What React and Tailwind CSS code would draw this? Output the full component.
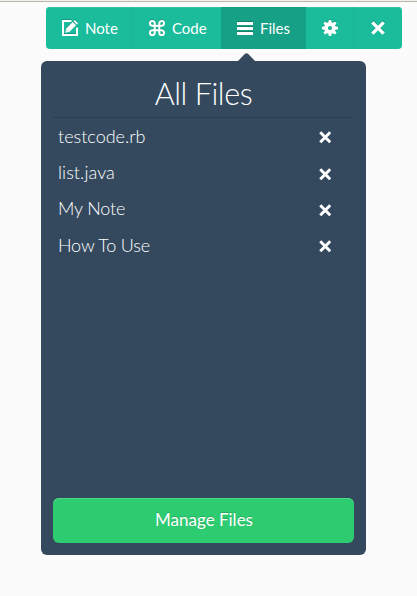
import React from 'react';

function Cross({ className }) {
  return (
    <svg className={className} viewBox="0 0 14 14" fill="none" stroke="currentColor" strokeWidth="3.3" strokeLinecap="butt">
      <path d="M1.4 1.4 12.6 12.6M12.6 1.4 1.4 12.6" />
    </svg>
  );
}

function NoteIcon() {
  return (
    <svg className="size-4 shrink-0 drop-shadow-[0_-1px_0_#159a80]" viewBox="0 0 16 16" fill="none" stroke="currentColor">
      <path d="M9.5 1H1v14h14V7.5" strokeWidth="2" />
      <path d="M3.2 12.8l1-4.4 6.5-6.5 3.4 3.4-6.5 6.5zM11.5 1.3 12.8 0 16 3.2l-1.3 1.3z" fill="currentColor" stroke="none" />
      <path d="M4.6 10.2l1.3 1.3" stroke="#1abc9c" strokeWidth=".6" />
    </svg>
  );
}

function CommandIcon() {
  return (
    <svg className="size-4 shrink-0 drop-shadow-[0_-1px_0_#159a80]" viewBox="0 0 16 16" fill="none" stroke="currentColor" strokeWidth="2">
      <path d="M5.7 5.7h4.6v4.6H5.7zM5.7 5.7H3.35A2.35 2.35 0 1 1 5.7 3.35zM10.3 5.7V3.35a2.35 2.35 0 1 1 2.35 2.35zM10.3 10.3h2.35a2.35 2.35 0 1 1-2.35 2.35zM5.7 10.3v2.35a2.35 2.35 0 1 1-2.35-2.35z" />
    </svg>
  );
}

function MenuIcon() {
  return (
    <svg className="size-4 shrink-0 drop-shadow-[0_-1px_0_#128269]" viewBox="0 0 16 16" fill="currentColor">
      <path d="M0 2h16v3H0zM0 7h16v3H0zM0 12h16v3H0z" />
    </svg>
  );
}

const TEETH = [0, 45, 90, 135, 180, 225, 270, 315];

function GearIcon() {
  return (
    <svg className="size-4 drop-shadow-[0_-1px_0_#159a80]" viewBox="0 0 16 16" fill="currentColor">
      <circle cx="8" cy="8" r="4" fill="none" stroke="currentColor" strokeWidth="3.8" />
      {TEETH.map((angle) => (
        <path key={angle} d="M6.3 3 6.8 0h2.4L9.7 3z" transform={`rotate(${angle} 8 8)`} />
      ))}
    </svg>
  );
}

const FILES = [
  { name: 'testcode.rb', tracking: 'tracking-normal' },
  { name: 'list.java', tracking: 'tracking-[0.08px]' },
  { name: 'My Note', tracking: 'tracking-[-0.15px]' },
  { name: 'How To Use', tracking: 'tracking-[-0.18px]' },
];

export default function App() {
  return (
    <div className="h-[596px] w-[417px] overflow-hidden bg-[#fbfbfb] font-['Lato',sans-serif] text-white">
      <div className="h-0.5 border-b border-[#bab8ad] bg-[#f1f0ea]" />
      <nav className="mt-[5px] ml-[46px] flex h-[42px] w-[356px] overflow-hidden rounded bg-[#1abc9c] text-[15px] shadow-[inset_0_1px_0_#35c4a8] text-shadow-[0_-1px_0_#159a80]">
        <button className="flex w-[87px] items-center gap-[7px] border-r border-[#19b395] pl-4"><NoteIcon />Note</button>
        <button className="flex w-[88px] items-center gap-[7px] pl-4"><CommandIcon />Code</button>
        <button className="flex w-[85px] items-center gap-[7px] bg-[#16a085] pl-4"><MenuIcon />Files</button>
        <button className="flex w-12 items-center justify-center border-r border-[#19b395]"><GearIcon /></button>
        <button className="flex w-12 items-center justify-center"><Cross className="size-[14px] drop-shadow-[0_-1px_0_#159a80]" /></button>
      </nav>
      <section className="relative mt-3 ml-[41px] flex h-[494px] w-[325px] flex-col rounded-md bg-[#34495e] px-3 pb-3">
        <svg className="absolute -top-2 left-[196px] h-[9px] w-[19px]" viewBox="0 0 19 9" fill="#34495e">
          <path d="M0 9 8 .7Q9.5-.4 11 .7L19 9z" />
        </svg>
        <h1 className="h-[57px] border-b border-[#2c3e50] pt-[9px] text-center text-[30.5px] leading-[46px] font-light tracking-[-0.4px]">All Files</h1>
        <ul>
          {FILES.map(({ name, tracking }) => (
            <li key={name} className="flex h-[36.3px] items-center justify-between pr-[23px] pl-[5px] text-[18px] font-light">
              <span className={tracking}>{name}</span>
              <Cross className="mt-[3px] size-[12.5px]" />
            </li>
          ))}
        </ul>
        <button className="mt-auto h-[45px] rounded-md bg-[#2ecc71] pb-px pl-px text-[17px] shadow-[inset_0_1px_0_#4cd687] text-shadow-[0_-1px_0_#26ad5f]">Manage Files</button>
      </section>
    </div>
  );
}
